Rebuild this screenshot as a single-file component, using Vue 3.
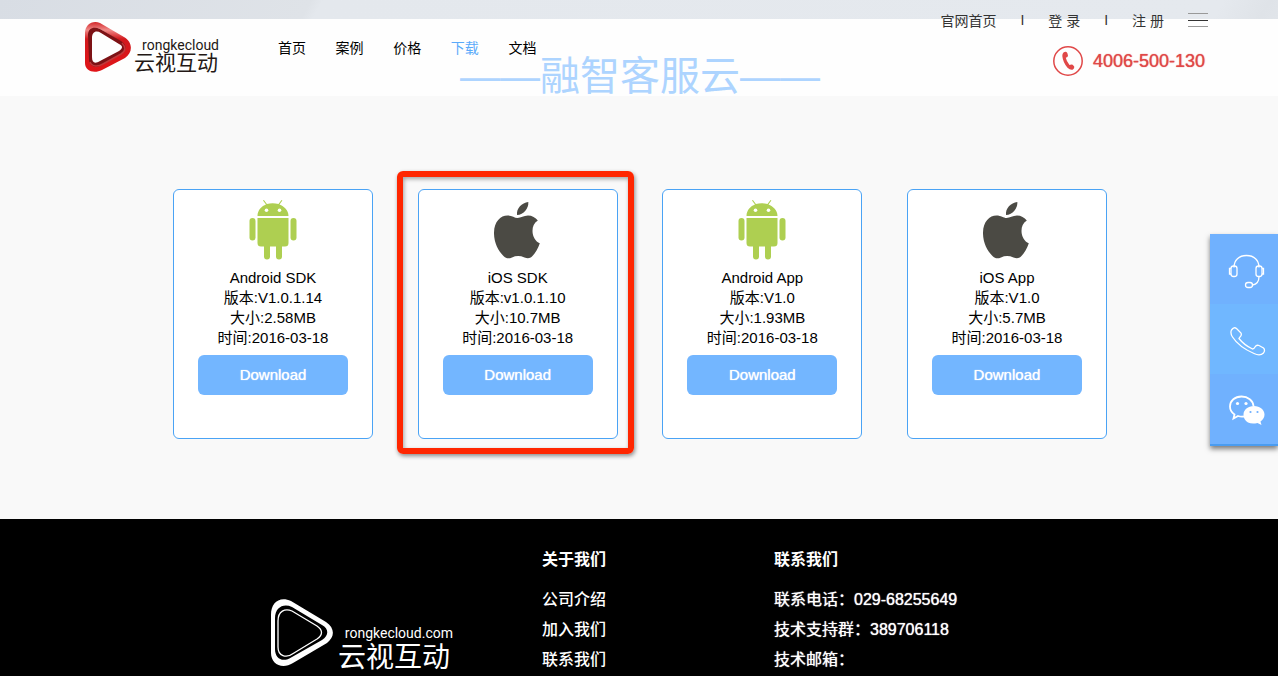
<script setup>
const nav = [
  { label: '首页' },
  { label: '案例' },
  { label: '价格' },
  { label: '下载', active: true },
  { label: '文档' },
]

const products = [
  { os: 'android', name: 'Android SDK', version: 'V1.0.1.14', size: '2.58MB', date: '2016-03-18' },
  { os: 'ios', name: 'iOS SDK', version: 'v1.0.1.10', size: '10.7MB', date: '2016-03-18', marked: true },
  { os: 'android', name: 'Android App', version: 'V1.0', size: '1.93MB', date: '2016-03-18' },
  { os: 'ios', name: 'iOS App', version: 'V1.0', size: '5.7MB', date: '2016-03-18' },
]

const about = ['公司介绍', '加入我们', '联系我们']
const contact = ['联系电话：029-68255649', '技术支持群：389706118', '技术邮箱：']
</script>

<template>
  <div class="page">
    <header class="header">
      <h1 class="title">——融智客服云——</h1>
      <a class="brand" href="#">
        <svg class="brand-mark" viewBox="0 0 48 52" aria-hidden="true">
          <defs>
            <linearGradient id="redRim" x1="0" y1="0" x2="0" y2="1">
              <stop offset="0" stop-color="#d3282b" />
              <stop offset="0.16" stop-color="#f08a88" />
              <stop offset="0.34" stop-color="#d2191d" />
              <stop offset="1" stop-color="#e01418" />
            </linearGradient>
          </defs>
          <path fill="url(#redRim)" fill-rule="evenodd" d="M1 12C1 4 8-1 16 2L40 16C49 21 49 32 41 37L18 49C10 53 1 50 1 42ZM7 14V38C7 44 11 46 16 43L37 32C42 29 42 24 37 21L16 8C11 6 7 9 7 14Z" />
          <path fill="#7d1215" fill-rule="evenodd" d="M4 14C4 7 10 5 16 8L37 20C43 24 43 29 37 33L18 44C11 48 5 45 5 38ZM8 17V36C8 42 11 43 16 40L35 30C39 27 39 25 35 23L17 12C12 9 8 11 8 17Z" />
          <path fill="none" stroke="#c0393b" stroke-width="1.500" d="M6 41C8 46 14 46 19 43L37 33C42 30 42 26 38 22" />
        </svg>
        <span class="brand-text">
          <span class="brand-latin">rongkecloud</span>
          <span class="brand-cjk">云视互动</span>
        </span>
      </a>
      <nav class="nav">
        <a v-for="n in nav" :key="n.label" href="#" :class="{ active: n.active }">{{ n.label }}</a>
      </nav>
      <div class="header-right">
        <div class="account">
          <a href="#">官网首页</a>
          <span>I</span>
          <a href="#">登 录</a>
          <span>I</span>
          <a href="#">注 册</a>
          <button class="menu" type="button" aria-label="菜单">
            <svg viewBox="0 0 20 16"><path d="M0 1.500H20M0 14.500H20" stroke="#999" /><path d="M0 8.500H20" stroke="#333" /></svg>
          </button>
        </div>
        <a class="hotline" href="tel:4006500130">
          <svg viewBox="0 0 30 30" aria-hidden="true">
            <circle cx="15" cy="15" r="14.200" fill="none" stroke="#e04848" stroke-width="1.500" />
            <path fill="#e04848" d="M10.500 6.500Q13 5 14.300 7L15 9.500Q15 11.200 12.800 11.800Q13.500 15.500 16.500 19Q18.200 18 19.700 18.800L21.200 20.500Q21.700 22 20 23.500Q17.500 24.500 14.500 21.800Q10 16.500 9.300 10Q9.200 7.500 10.500 6.500Z" />
          </svg>
          <span>4006-500-130</span>
        </a>
      </div>
    </header>

    <main class="main">
      <ul class="cards">
        <li v-for="p in products" :key="p.name" class="card" :class="{ marked: p.marked }">
          <svg v-if="p.os === 'android'" class="os" viewBox="0 0 48 60" aria-hidden="true">
            <g fill="#aecf51">
              <path d="M8.500 16C8.500 10 13 6 17 4.500L14 .6L14.900 0L17.900 4.100Q23.500 2.300 29.500 4.100L32.500 0L33.400 .6L30.500 4.500C35 6.500 39.500 10 39.500 16Z" />
              <path d="M8.500 18H39.500V43Q39.500 46.500 36 46.500H33V56.500A3 3 0 0 1 27 56.500V46.500H21V56.500A3 3 0 0 1 15 56.500V46.500H12Q8.500 46.500 8.500 43Z" />
              <rect x="0.500" y="18" width="6" height="22.500" rx="3" />
              <rect x="41.500" y="18" width="6" height="22.500" rx="3" />
            </g>
            <circle cx="17.500" cy="10.300" r="1.800" fill="#fff" />
            <circle cx="30.500" cy="10.300" r="1.800" fill="#fff" />
          </svg>
          <svg v-else class="os" viewBox="1 0 48 60" aria-hidden="true">
            <g fill="#4b4a44">
              <path d="M35.300 2C36 8 30.500 15 24 15C23.200 8.500 28.800 2.700 35.300 2Z" />
              <path d="M24.500 18C28 18 30.500 15.500 35 15.500C39 15.500 42.500 17.500 44.800 20.500C41 23 39.500 26.500 39.500 31C39.500 36.500 42.500 41.500 46.800 43.300C45 49 42 53.500 39 56.500C37 58.400 34.500 58.600 31.500 57.400C27 55.600 23 55.600 19 57.400C15.500 59 13 58.400 11 56.500C5 51 .8 42 1 32.500C1.200 21.500 7.500 15.500 14.500 15.500C19 15.500 21.500 18 24.500 18Z" />
            </g>
          </svg>
          <h2>{{ p.name }}</h2>
          <p>版本:{{ p.version }}</p>
          <p>大小:{{ p.size }}</p>
          <p>时间:{{ p.date }}</p>
          <button class="download" type="button">Download</button>
        </li>
      </ul>
    </main>

    <footer class="footer">
      <a class="footer-brand" href="#">
        <svg class="footer-mark" viewBox="0 0 64 68" aria-hidden="true">
          <path fill="#fff" fill-rule="evenodd" d="M1 16C1 4 9-3 21 2L56 23C65 29 65 38 57 44L23 64C12 71 1 65 1 54ZM5 19V50C5 60 13 64 22 58L52 41C59 36 59 30 52 26L22 8C13 4 5 9 5 19Z" />
          <path fill="none" stroke="#fff" stroke-width="1.300" d="M8 22C8 12 15 9 22 12L47 27C53 31 53 36 47 40L24 54C16 60 8 57 8 48Z" />
        </svg>
        <span class="brand-text">
          <span class="brand-latin">rongkecloud.com</span>
          <span class="brand-cjk">云视互动</span>
        </span>
      </a>
      <section class="about">
        <h3>关于我们</h3>
        <a v-for="t in about" :key="t" href="#">{{ t }}</a>
      </section>
      <section class="contact">
        <h3>联系我们</h3>
        <p v-for="t in contact" :key="t">{{ t }}</p>
      </section>
    </footer>

    <aside class="side">
      <button type="button" aria-label="在线客服">
        <svg viewBox="0 0 38 36" fill="none" stroke="#fff" stroke-width="1.300">
          <path d="M6 13.500C6 6 11 1.500 18.500 1.500S31 6 31 13.500" />
          <rect x="3" y="12" width="6" height="10.500" rx="2.500" />
          <rect x="28" y="12" width="6" height="10.500" rx="2.500" />
          <path d="M3 14.500H1.500V20H3M34 14.500H35.500V20H34M31 22.500Q31 30 24.500 31" />
          <rect x="17.500" y="28.500" width="7" height="5" rx="2.500" />
        </svg>
      </button>
      <button type="button" aria-label="电话">
        <svg viewBox="0 0 38 36" fill="none" stroke="#fff" stroke-width="1.300">
          <path d="M3.500 6Q6 2.500 8.500 4.500L13 9Q14 11.500 12 13L11 14.500Q16 21 24.500 25Q26 25 27 23Q28.500 20.500 31 21.500L35.500 24Q37.500 26 35.500 29Q32 32.500 26 29.500Q11 23 4.500 13Q2 9 3.500 6Z" />
        </svg>
      </button>
      <button type="button" aria-label="微信">
        <svg viewBox="0 0 38 36">
          <path fill="none" stroke="#fff" stroke-width="1.800" d="M16 22.500Q13 23 10 22L5.500 24.500L6.500 20.500Q2 17.500 2 12.500C2 6.500 7 2.500 13.500 2.500S25 6.500 25.500 12" />
          <path fill="#fff" d="M26 12C32 12 36.500 16 36.500 20.500Q36.500 24.500 32.500 27.500L33.500 31L29.500 29Q24 30.300 20 28.500Q15.500 26 15.500 20.500C15.500 16 20 12 26 12Z" />
          <circle cx="9.500" cy="9.500" r="1.600" fill="#fff" />
          <circle cx="18" cy="9.500" r="1.600" fill="#fff" />
          <circle cx="22.500" cy="18" r="1.100" fill="#6fb0fe" />
          <circle cx="29.500" cy="18" r="1.100" fill="#6fb0fe" />
        </svg>
      </button>
    </aside>
  </div>
</template>

<style>
body {
  margin: 0;
  background: #000;
}
</style>

<style scoped>
.page {
  position: relative;
  background: #f9f9f9;
  font-family: "Liberation Sans", "Noto Sans CJK SC", sans-serif;
  color: #000;
}
a {
  color: inherit;
  text-decoration: none;
}
h1, h2, h3, p, ul {
  margin: 0;
  padding: 0;
  font-weight: 400;
}
button {
  border: 0;
  padding: 0;
  background: none;
  font: inherit;
  color: inherit;
  cursor: pointer;
}
svg {
  display: block;
}

.header {
  position: relative;
  display: flex;
  height: 96px;
  padding: 0 68px 0 84px;
  background:
    linear-gradient(120deg, #d8dde4 0, #dfe3e8 270px, #e4e8ed 280px, #e5e9ee 1060px, #dfe3e8 1100px, #e4e8ed 1150px, #e5e9ee 100%) 0 0 / 100% 19px no-repeat,
    #fefefe;
}
.title {
  position: absolute;
  left: 2px;
  right: 0;
  top: 46px;
  text-align: center;
  font-size: 40px;
  line-height: 60px;
  font-weight: 400;
  color: #add4ff;
}
.brand {
  position: relative;
  display: flex;
  gap: 2px;
  width: 194px;
}
.brand-mark {
  width: 48px;
  height: 52px;
  margin-top: 21px;
}
.brand-text {
  display: flex;
  flex-direction: column;
}
.brand .brand-text {
  margin-top: 37px;
  width: 85px;
  color: #231815;
}
.brand-latin {
  text-align: right;
  font-family: Roboto, "Open Sans", sans-serif;
}
.brand-cjk {
  font-family: "Noto Sans CJK SC", sans-serif;
}
.brand .brand-latin {
  font-size: 14px;
  line-height: 16px;
}
.brand .brand-cjk {
  font-size: 21px;
  line-height: 16px;
}
.nav {
  position: relative;
  display: grid;
  grid-template-columns: repeat(5, 1fr);
  width: 288px;
  margin-top: 38px;
  align-self: flex-start;
  font-size: 14px;
  line-height: 20px;
}
.nav .active {
  color: #5aaafa;
}
.header-right {
  display: flex;
  flex-direction: column;
  align-items: flex-end;
  margin-left: auto;
  position: relative;
}
.account {
  display: flex;
  align-items: center;
  gap: 24px;
  height: 20px;
  margin: 10px 2px 0 0;
  font-size: 14px;
  color: #333;
}
.menu svg {
  width: 20px;
  height: 16px;
}
.hotline {
  display: flex;
  align-items: center;
  gap: 10px;
  margin: 16px 5px 0 0;
  font-size: 18px;
  color: #e04848;
  text-shadow: 0 0 1px #e04848;
}
.hotline svg {
  width: 30px;
  height: 30px;
}

.main {
  padding: 93px 0 80px 2px;
}
.cards {
  display: flex;
  justify-content: space-between;
  max-width: 934px;
  margin: 0 auto;
  list-style: none;
}
.card {
  position: relative;
  display: flex;
  flex-direction: column;
  align-items: center;
  box-sizing: border-box;
  width: 200px;
  height: 250px;
  padding-top: 10px;
  border: 1px solid #4aa3f5;
  border-radius: 6px;
  background: #fff;
  font-size: 15px;
  line-height: 20px;
}
.card.marked::after {
  content: "";
  position: absolute;
  inset: -19px -17px -16px -22px;
  border: 6px solid #ff2600;
  border-radius: 6px;
  box-shadow: 1px 2px 4px rgba(0, 0, 0, 0.45), inset 1px 2px 4px rgba(0, 0, 0, 0.35);
  pointer-events: none;
}
.card h2 {
  font-size: 15px;
}
.os {
  width: 48px;
  height: 60px;
  margin-bottom: 8px;
}
.download {
  width: 150px;
  height: 40px;
  margin-top: 7px;
  border-radius: 6px;
  background: #73b6ff;
  color: #fff;
  text-shadow: 0 0 1px #fff;
}

.footer {
  display: flex;
  padding: 26px 0 2px 270px;
  background: #000;
  color: #fff;
  font-size: 16px;
  line-height: 30px;
}
.footer section {
  display: flex;
  flex-direction: column;
  font-weight: 500;
}
.footer h3 {
  margin-bottom: 10px;
  font-size: 16px;
  font-weight: 700;
}
.footer-brand {
  display: flex;
  gap: 4px;
  width: 272px;
}
.footer-mark {
  width: 64px;
  height: 68px;
  margin-top: 54px;
}
.footer .brand-text {
  width: 115px;
  margin-top: 78px;
}
.footer .brand-latin {
  font-size: 14px;
  line-height: 20px;
}
.footer .brand-cjk {
  font-size: 28px;
  line-height: 24px;
}
.about {
  width: 232px;
}
.contact p {
  text-shadow: 0 0 1px #fff;
}

.side {
  position: absolute;
  right: 0;
  top: 234px;
  display: flex;
  flex-direction: column;
  width: 68px;
  border-bottom: 2px solid #4a9cf0;
  box-shadow: 0 3px 5px rgba(0, 0, 0, 0.5);
}
.side button {
  display: flex;
  align-items: center;
  justify-content: center;
  height: 70px;
  padding: 5px 0 0 6px;
  background: #70b1fe;
}
.side button:nth-child(2) {
  background: #70b7ff;
}
.side svg {
  width: 38px;
  height: 36px;
}
</style>
